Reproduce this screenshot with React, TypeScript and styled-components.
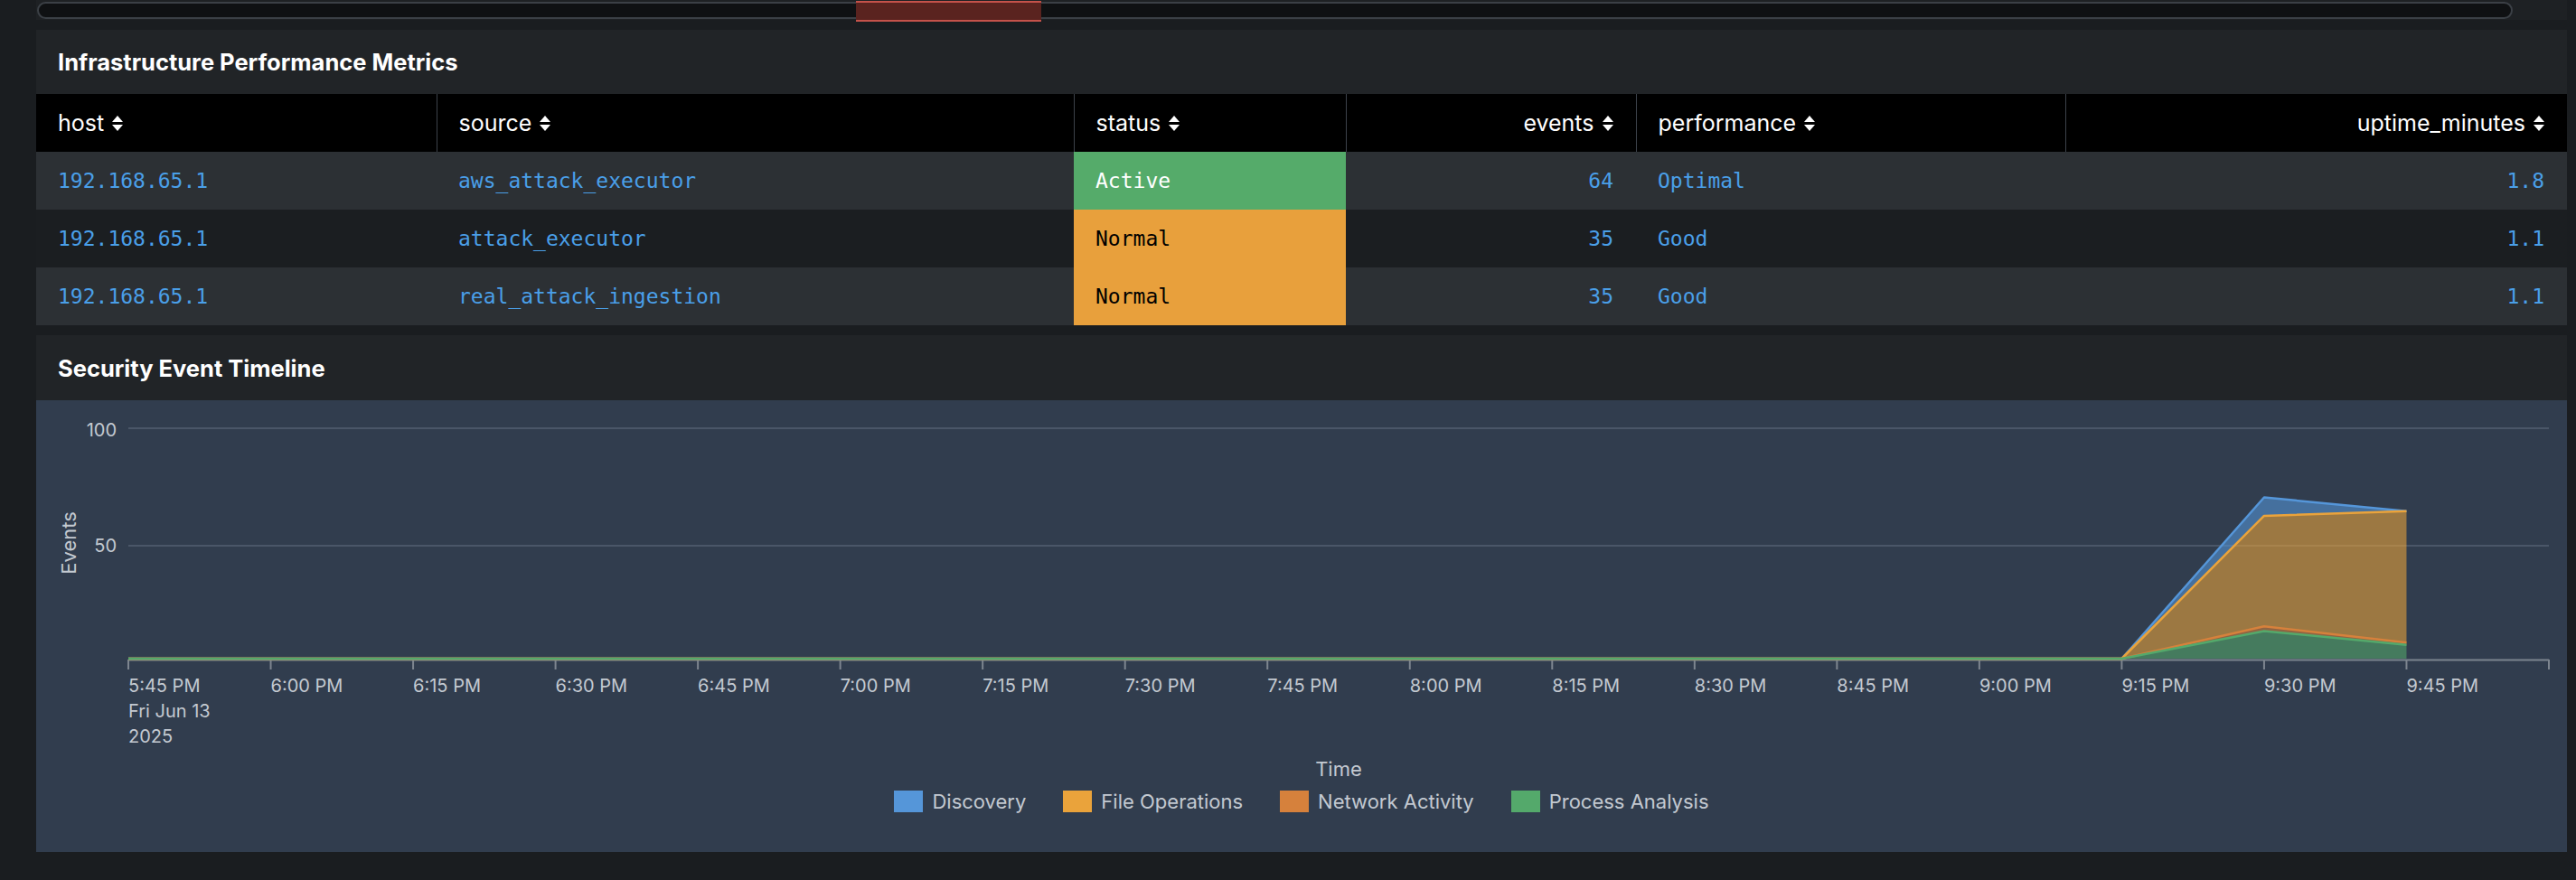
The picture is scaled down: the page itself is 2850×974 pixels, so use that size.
import React from "react";
import styled, { createGlobalStyle } from "styled-components";

const SANS = `Inter, Lato, "Noto Sans", sans-serif`;

const GlobalStyle = createGlobalStyle`
  html, body { margin: 0; padding: 0; background: #1a1d20; }
  body { font-family: ${SANS}; }
  * { box-sizing: border-box; }
`;

const Page = styled.div`
  width: 2850px;
  height: 974px;
  padding: 0 10px 0 40px;
  display: flex;
  flex-direction: column;
  gap: 11px;
  overflow: hidden;
`;

const TopStrip = styled.div`
  height: 22px;
  background: #1e2124;
  display: flex;
  align-items: center;
  flex-shrink: 0;
`;

const Pill = styled.div`
  position: relative;
  margin-left: 1px;
  width: 2739px;
  height: 19px;
  border: 2px solid #3b4046;
  border-radius: 10px;
  background: #0f1113;
`;

const Selection = styled.div`
  position: absolute;
  left: 904px;
  top: -3px;
  width: 205px;
  height: 23px;
  background: #5a231f;
  border-top: 2px solid #c4524a;
  border-bottom: 2px solid #c4524a;
`;

const Panel = styled.section`
  background: #212427;
  flex-shrink: 0;
  display: flex;
  flex-direction: column;
`;

const PanelTitle = styled.h2<{ $h: number }>`
  margin: 0;
  height: ${(p) => p.$h}px;
  padding-left: 24px;
  display: flex;
  align-items: center;
  color: #ffffff;
  font-size: 25.5px;
  font-weight: 700;
`;

const Table = styled.table`
  width: 2800px;
  border-collapse: collapse;
  table-layout: fixed;
`;

const Th = styled.th<{ $right?: boolean; $first?: boolean }>`
  height: 64px;
  padding: 0 25px 0 24px;
  background: #000;
  color: #fff;
  font-size: 25px;
  font-weight: 400;
  text-align: ${(p) => (p.$right ? "right" : "left")};
  border-left: ${(p) => (p.$first ? "none" : "1px solid #3c424a")};
  white-space: nowrap;
`;

const HeadInner = styled.span`
  display: inline-flex;
  align-items: center;
  gap: 9px;
`;

const Tr = styled.tr<{ $alt: boolean }>`
  background: ${(p) => (p.$alt ? "#1b1e21" : "#2c3034")};
`;

const Td = styled.td<{ $right?: boolean; $bg?: string; $fg?: string }>`
  height: 64px;
  padding: 0 25px 0 24px;
  font-family: "DejaVu Sans Mono", "Liberation Mono", monospace;
  font-size: 23px;
  color: ${(p) => p.$fg || "#4a9fe8"};
  background: ${(p) => p.$bg || "transparent"};
  text-align: ${(p) => (p.$right ? "right" : "left")};
  white-space: nowrap;
`;

const ChartArea = styled.div`
  height: 500px;
  background: #313d4e;
  display: flex;
  flex-direction: column;
`;

const Legend = styled.div`
  margin-top: 8px;
  display: flex;
  justify-content: center;
  gap: 41px;
`;

const LegendItem = styled.div`
  display: flex;
  align-items: center;
  gap: 10px;
  height: 24px;
  color: #c3c9d1;
  font-size: 22px;
`;

const Swatch = styled.span<{ $c: string }>`
  width: 32px;
  height: 24px;
  background: ${(p) => p.$c};
`;

const SortIcon = () => (
  <svg width="12" height="19" viewBox="0 0 12 19">
    <polygon points="0,8 6,1 12,8" fill="#fff" />
    <polygon points="0,11 6,18 12,11" fill="#fff" />
  </svg>
);

const columns = [
  { key: "host", w: 443 },
  { key: "source", w: 705 },
  { key: "status", w: 301 },
  { key: "events", w: 321, right: true },
  { key: "performance", w: 475 },
  { key: "uptime_minutes", w: 555, right: true },
];

const rows = [
  { host: "192.168.65.1", source: "aws_attack_executor", status: "Active", events: "64", performance: "Optimal", uptime: "1.8" },
  { host: "192.168.65.1", source: "attack_executor", status: "Normal", events: "35", performance: "Good", uptime: "1.1" },
  { host: "192.168.65.1", source: "real_attack_ingestion", status: "Normal", events: "35", performance: "Good", uptime: "1.1" },
];

const statusColors: Record<string, { bg: string; fg: string }> = {
  Active: { bg: "#55ab6a", fg: "#ffffff" },
  Normal: { bg: "#e8a03c", fg: "#000000" },
};

const COLORS = {
  discovery: "#5596d9",
  file: "#eaa33b",
  network: "#d6813c",
  process: "#54a96b",
};

const times = [
  "5:45 PM", "6:00 PM", "6:15 PM", "6:30 PM", "6:45 PM", "7:00 PM", "7:15 PM", "7:30 PM",
  "7:45 PM", "8:00 PM", "8:15 PM", "8:30 PM", "8:45 PM", "9:00 PM", "9:15 PM", "9:30 PM", "9:45 PM",
];

const Chart = () => {
  const W = 2800;
  const H = 424;
  const x0 = 102;
  const x1 = 2780;
  const step = (x1 - x0) / 17;
  const yZero = 286;
  const per = 2.55;
  const X = (i: number) => x0 + i * step;
  const Y = (v: number) => yZero - v * per;

  const series = [
    { c: COLORS.process, v: [0, 12, 6] },
    { c: COLORS.network, v: [0, 2, 1] },
    { c: COLORS.file, v: [0, 48, 57] },
    { c: COLORS.discovery, v: [0, 8, 0] },
  ];
  const idx = [14, 15, 16];
  let cum = [0, 0, 0];
  const layers = series.map((s) => {
    const lower = cum;
    const upper = cum.map((c, k) => c + s.v[k]);
    cum = upper;
    const up = idx.map((i, k) => `${X(i)},${Y(upper[k])}`);
    const lo = idx.map((i, k) => `${X(i)},${Y(lower[k])}`).reverse();
    const area = [...up, ...lo].join(" ");
    const line = [`${X(0)},${yZero}`, ...up].join(" ");
    return { c: s.c, area, line };
  });

  return (
    <svg width={W} height={H} viewBox={`0 0 ${W} ${H}`} style={{ display: "block" }}>
      <g fontFamily={SANS} fill="#c3c9d1">
        <line x1={x0} x2={x1} y1={31} y2={31} stroke="#4a5668" strokeWidth={2} />
        <line x1={x0} x2={x1} y1={161} y2={161} stroke="#4a5668" strokeWidth={2} />
        <text x={89} y={40} fontSize={20} textAnchor="end">100</text>
        <text x={89} y={168} fontSize={20} textAnchor="end">50</text>
        <text x={0} y={0} fontSize={22} textAnchor="middle" transform="translate(44 158) rotate(-90)">Events</text>

        {layers.map((l, i) => (
          <polygon key={`a${i}`} points={l.area} fill={l.c} fillOpacity={0.58} />
        ))}

        <line x1={x0} x2={x1} y1={287.5} y2={287.5} stroke="#7d858f" strokeWidth={2} />
        {Array.from({ length: 18 }).map((_, i) => (
          <line key={`t${i}`} x1={X(i)} x2={X(i)} y1={287} y2={298} stroke="#7d858f" strokeWidth={2} />
        ))}

        {[...layers].reverse().map((l, i) => (
          <polyline key={`l${i}`} points={l.line} fill="none" stroke={l.c} strokeWidth={2.5} strokeLinejoin="round" />
        ))}

        {times.map((t, i) => (
          <text key={t} x={X(i)} y={323} fontSize={20}>{t}</text>
        ))}
        <text x={X(0)} y={351} fontSize={20}>Fri Jun 13</text>
        <text x={X(0)} y={379} fontSize={20}>2025</text>
        <text x={(x0 + x1) / 2} y={416} fontSize={22} textAnchor="middle">Time</text>
      </g>
    </svg>
  );
};

export default function App() {
  return (
    <>
      <GlobalStyle />
      <Page>
        <TopStrip>
          <Pill>
            <Selection />
          </Pill>
        </TopStrip>

        <Panel>
          <PanelTitle $h={71}>Infrastructure Performance Metrics</PanelTitle>
          <Table>
            <colgroup>
              {columns.map((c) => (
                <col key={c.key} style={{ width: c.w }} />
              ))}
            </colgroup>
            <thead>
              <tr>
                {columns.map((c, i) => (
                  <Th key={c.key} $right={c.right} $first={i === 0}>
                    <HeadInner>
                      {c.key}
                      <SortIcon />
                    </HeadInner>
                  </Th>
                ))}
              </tr>
            </thead>
            <tbody>
              {rows.map((r, i) => {
                const sc = statusColors[r.status];
                return (
                  <Tr key={r.source} $alt={i % 2 === 1}>
                    <Td>{r.host}</Td>
                    <Td>{r.source}</Td>
                    <Td $bg={sc.bg} $fg={sc.fg}>{r.status}</Td>
                    <Td $right>{r.events}</Td>
                    <Td>{r.performance}</Td>
                    <Td $right>{r.uptime}</Td>
                  </Tr>
                );
              })}
            </tbody>
          </Table>
        </Panel>

        <Panel>
          <PanelTitle $h={72}>Security Event Timeline</PanelTitle>
          <ChartArea>
            <Chart />
            <Legend>
              <LegendItem><Swatch $c={COLORS.discovery} />Discovery</LegendItem>
              <LegendItem><Swatch $c={COLORS.file} />File Operations</LegendItem>
              <LegendItem><Swatch $c={COLORS.network} />Network Activity</LegendItem>
              <LegendItem><Swatch $c={COLORS.process} />Process Analysis</LegendItem>
            </Legend>
          </ChartArea>
        </Panel>
      </Page>
    </>
  );
}
